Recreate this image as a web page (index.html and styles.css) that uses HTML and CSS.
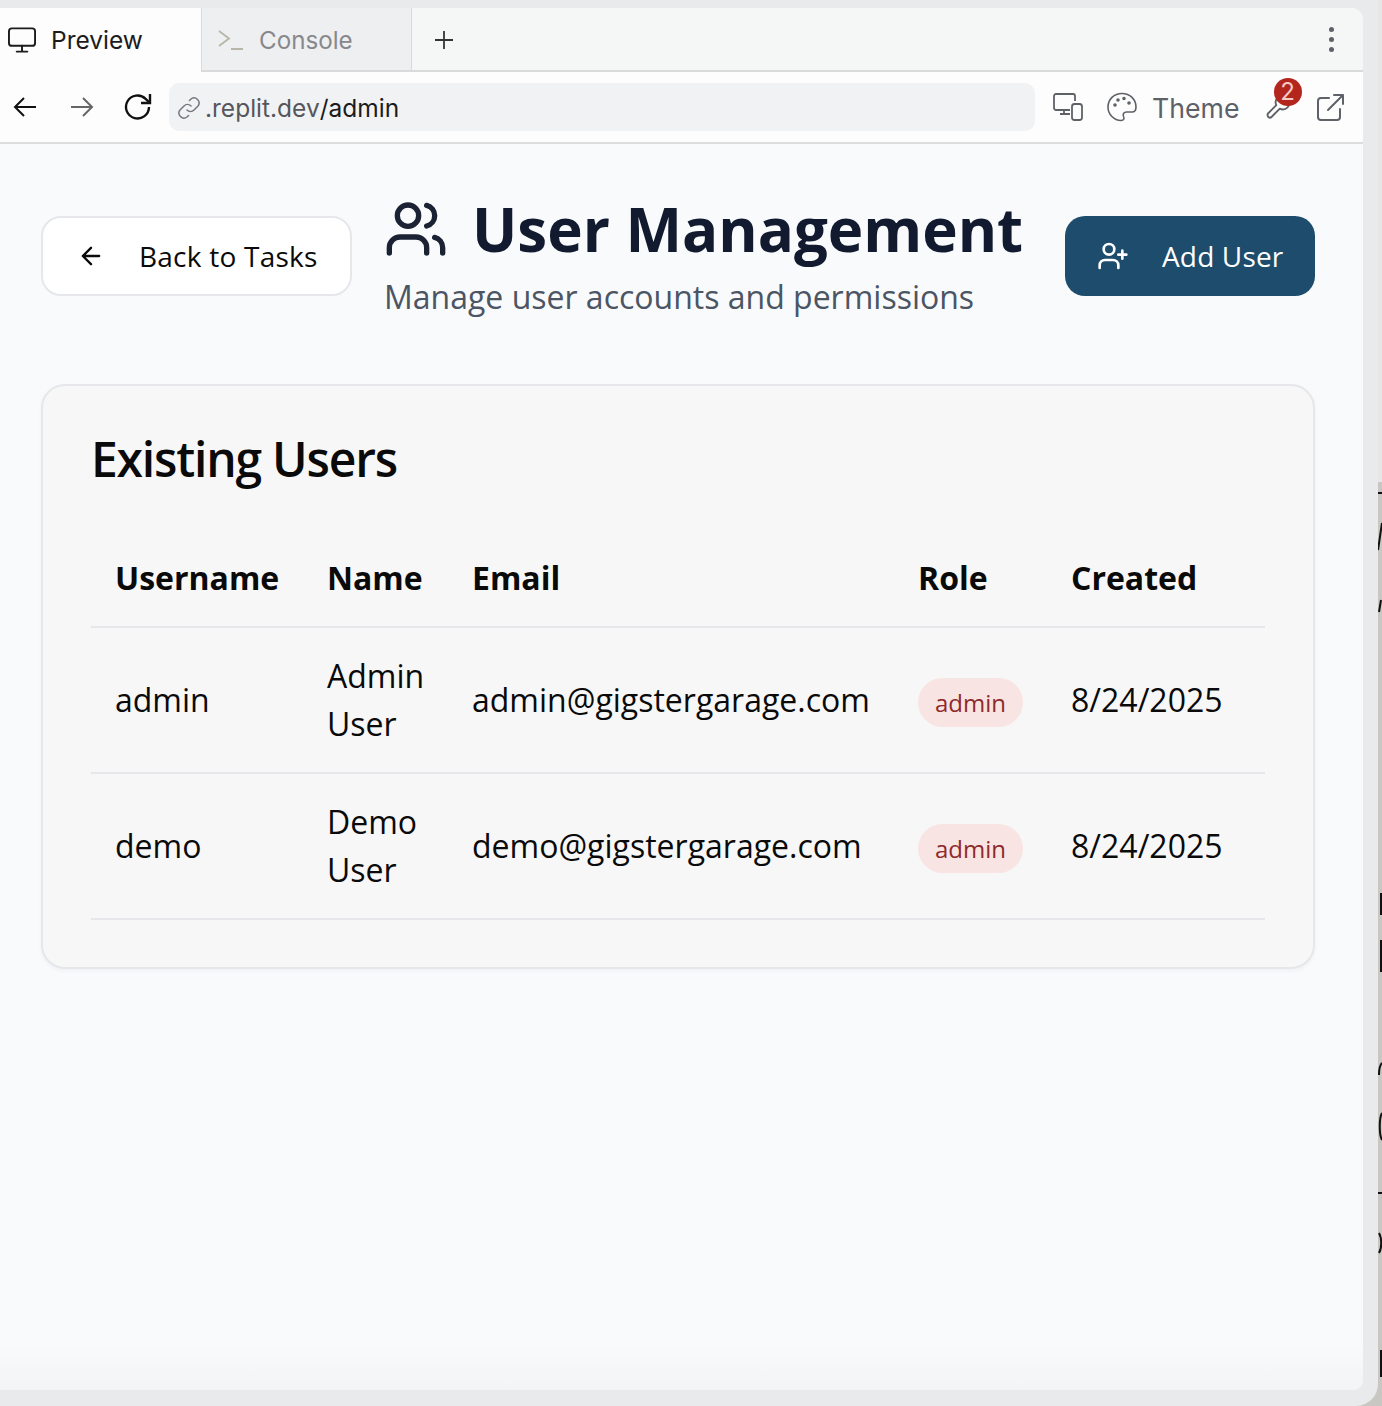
FILE: index.html
```html
<!DOCTYPE html>
<html lang="en">
<head>
  <meta charset="UTF-8">
  <title>User Management</title>
  <link rel="stylesheet" href="styles.css">
</head>
<body>
  <div class="screen">
    <div class="window">
      <div class="tabbar">
        <div class="tab tab-active">
          <svg class="ico-tab" viewBox="0 0 30 26" fill="none" stroke="#1c1c1c" stroke-width="2" stroke-linecap="round" stroke-linejoin="round"><rect x="1" y="1" width="27" height="18" rx="3"/><path d="M14.5 19v5M9 25h11"/></svg>
          <span>Preview</span>
        </div>
        <div class="tab tab-console">
          <svg class="ico-console" viewBox="0 0 26 22" fill="none" stroke="#b8b6a8" stroke-width="1.8"><path d="M1 2l10 7.5L1 17"/><path d="M13 20h12"/></svg>
          <span>Console</span>
        </div>
        <div class="tab-add">
          <svg width="20" height="20" viewBox="0 0 20 20" stroke="#333" stroke-width="1.8"><path d="M10 1v18M1 10h18"/></svg>
        </div>
        <div class="tab-menu"><i></i><i></i><i></i></div>
      </div>
      <div class="toolbar">
        <svg class="nav nav-back" viewBox="0 0 24 24" fill="none" stroke="#111" stroke-width="2"><path d="M23 12H2M11 3l-9 9 9 9"/></svg>
        <svg class="nav nav-forward" viewBox="0 0 24 24" fill="none" stroke="#666" stroke-width="2"><path d="M1 12h21M13 3l9 9-9 9"/></svg>
        <svg class="nav nav-reload" viewBox="0 0 30 30" fill="none" stroke="#111" stroke-width="2.4"><path d="M26 15a11.500 11.500 0 1 1-3.400-8.200L27 11"/><path d="M27 2v9h-9"/></svg>
        <div class="urlbar">
          <svg width="24" height="24" viewBox="0 0 24 24" fill="none" stroke="#77787c" stroke-width="1.500" stroke-linecap="round"><path d="M10 14a5 5 0 0 0 7 0l4-4a5 5 0 0 0-7-7l-1.500 1.500"/><path d="M14 10a5 5 0 0 0-7 0l-4 4a5 5 0 0 0 7 7l1.500-1.500"/></svg>
          <span class="url-host">.replit.dev</span><span class="url-path">/admin</span>
        </div>
        <div class="tools">
          <svg class="tool-devices" viewBox="0 0 30 28" fill="none" stroke="#5f6168" stroke-width="1.800" stroke-linejoin="round"><path d="M17 17H3a2 2 0 0 1-2-2V3a2 2 0 0 1 2-2h17a2 2 0 0 1 2 2v5"/><path d="M11 17v4M7 21h10"/><rect x="19" y="11" width="10" height="16" rx="2.500"/></svg>
          <svg class="tool-palette" viewBox="0 0 30 30" fill="none" stroke="#5f6168" stroke-width="1.600"><path d="M15 1.500C7 1.500 1 7.500 1 15c0 7.500 6 13.500 13 13.500 3 0 3.500-2 2.500-4-1-2.500.5-4.500 3-4.500H25c2.500 0 4-2 4-5C29 7.500 23 1.500 15 1.500z"/><circle cx="8" cy="13" r="1" fill="#5f6168"/><circle cx="11" cy="8" r="1" fill="#5f6168"/><circle cx="17" cy="6.500" r="1" fill="#5f6168"/><circle cx="22" cy="11" r="1" fill="#5f6168"/></svg>
          <span class="theme">Theme</span>
          <div class="wrench">
            <svg viewBox="0 0 24 24" fill="none" stroke="#5f6168" stroke-width="1.600" stroke-linecap="round" stroke-linejoin="round"><path d="M14.700 6.300a1 1 0 0 0 0 1.400l1.600 1.600a1 1 0 0 0 1.400 0l3.770-3.770a6 6 0 0 1-7.940 7.940l-6.910 6.910a2.120 2.120 0 0 1-3-3l6.910-6.910a6 6 0 0 1 7.940-7.940l-3.760 3.760z"/></svg>
            <span class="badge-count">2</span>
          </div>
          <svg class="tool-open" viewBox="0 0 28 28" fill="none" stroke="#5f6168" stroke-width="2" stroke-linecap="round" stroke-linejoin="round"><path d="M12 5H4a3 3 0 0 0-3 3v16a3 3 0 0 0 3 3h16a3 3 0 0 0 3-3v-8"/><path d="M11 17L26 2M17 2h9v9"/></svg>
        </div>
      </div>
      <main class="page">
        <header class="page-head">
          <button class="btn btn-back">
            <svg width="28" height="28" viewBox="0 0 24 24" fill="none" stroke="#0a0a0a" stroke-width="2" stroke-linecap="round" stroke-linejoin="round"><path d="M19 12H5M12 19l-7-7 7-7"/></svg>
            Back to Tasks
          </button>
          <div class="title-block">
            <h1>
              <svg width="64" height="64" viewBox="0 0 24 24" fill="none" stroke="#1a2234" stroke-width="2" stroke-linecap="round" stroke-linejoin="round"><path d="M16 21v-2a4 4 0 0 0-4-4H6a4 4 0 0 0-4 4v2"/><circle cx="9" cy="7" r="4"/><path d="M22 21v-2a4 4 0 0 0-3-3.870"/><path d="M16 3.130a4 4 0 0 1 0 7.750"/></svg>
              User Management
            </h1>
            <p>Manage user accounts and permissions</p>
          </div>
          <button class="btn btn-add">
            <svg width="32" height="32" viewBox="0 0 24 24" fill="none" stroke="#fff" stroke-width="2" stroke-linecap="round" stroke-linejoin="round"><path d="M16 21v-2a4 4 0 0 0-4-4H6a4 4 0 0 0-4 4v2"/><circle cx="9" cy="7" r="4"/><path d="M19 8v6M22 11h-6"/></svg>
            Add User
          </button>
        </header>

        <section class="card">
          <h2>Existing Users</h2>
          <table class="users">
            <colgroup>
              <col class="c-user"><col class="c-name"><col class="c-email"><col class="c-role"><col class="c-created">
            </colgroup>
            <thead>
              <tr><th>Username</th><th>Name</th><th>Email</th><th>Role</th><th>Created</th></tr>
            </thead>
            <tbody>
              <tr>
                <td class="uname">admin</td><td>Admin User</td><td>admin@gigstergarage.com</td>
                <td><span class="role">admin</span></td><td>8/24/2025</td>
              </tr>
              <tr>
                <td class="uname">demo</td><td>Demo User</td><td>demo@gigstergarage.com</td>
                <td><span class="role">admin</span></td><td>8/24/2025</td>
              </tr>
            </tbody>
          </table>
        </section>
      </main>
    </div>
  </div>
  <!-- sliver of the window behind -->
  <div class="edge">
    <svg width="4" height="1406" viewBox="0 0 4 1406" fill="none" stroke="#111" stroke-width="2">
      <path d="M0 493h4M4 523L0 550M3 600L1 612M3 893v22M3 940v32"/>
      <path d="M4 1063c-2 2-3 5-3 12M4 1113c-3 5-3 22 0 27M0 1193h4M1 1233c3 5 3 15 0 20M3 1350v27"/>
    </svg>
  </div>
</body>
</html>
```

FILE: styles.css
```css
html, body {
  margin: 0;
  padding: 0;
}
body {
  display: flex;
  width: 1382px;
  height: 1406px;
  overflow: hidden;
  background: #c9c7c1;
  font-family: "Open Sans", "Liberation Sans", sans-serif;
}
.screen {
  width: 1378px;
  height: 1406px;
  flex-shrink: 0;
  box-sizing: border-box;
  padding: 8px 15px 16px 0;
  background: #e9eaec;
  border-bottom-right-radius: 22px;
  overflow: hidden;
}
.edge {
  width: 4px;
  height: 1406px;
  flex-shrink: 0;
  background: linear-gradient(to bottom, #e6e6e6 0, #e6e6e6 482px, #c9c7c1 482px);
}
.edge svg {
  display: block;
}
.window {
  width: 1363px;
  height: 1382px;
  display: flex;
  flex-direction: column;
  border-radius: 0 12px 10px 0;
  overflow: hidden;
  background: #f9fafc;
}

/* tabs */
.tabbar {
  height: 64px;
  display: flex;
  align-items: stretch;
  flex-shrink: 0;
  background: #f5f7f7;
  font-family: "Inter", "Roboto", sans-serif;
  font-size: 24.5px;
}
.tab {
  display: flex;
  align-items: center;
  gap: 14px;
  box-sizing: border-box;
}
.tab-active {
  width: 202px;
  padding-left: 8px;
  background: #fdfdfd;
  color: #1c1c1c;
  border-right: 1px solid #d9dad9;
}
.tab-console {
  width: 210px;
  padding: 2px 0 0 16px;
  gap: 15px;
  background: #eeeff1;
  color: #87888c;
  font-size: 24.2px;
  border-right: 1px solid #d9dad9;
  border-bottom: 2px solid #d9dad9;
}
.ico-tab {
  width: 29px;
  height: 26px;
}
.ico-console {
  width: 26px;
  height: 22px;
}
.tab-add {
  width: 64px;
  box-sizing: border-box;
  padding-top: 2px;
  display: flex;
  align-items: center;
  justify-content: center;
  border-bottom: 2px solid #d9dad9;
}
.tab-menu {
  flex: 1;
  display: flex;
  flex-direction: column;
  align-items: flex-end;
  justify-content: center;
  gap: 5px;
  padding-right: 29px;
  border-bottom: 2px solid #d9dad9;
}
.tab-menu i {
  width: 5px;
  height: 5px;
  border-radius: 50%;
  background: #5f6168;
}

/* toolbar */
.toolbar {
  height: 72px;
  box-sizing: border-box;
  display: flex;
  align-items: center;
  flex-shrink: 0;
  padding-left: 13px;
  background: #fdfdfd;
  border-bottom: 2px solid #dcdddd;
  font-family: "Inter", "Roboto", sans-serif;
}
.nav {
  width: 24px;
  height: 24px;
}
.nav-back {
  margin-right: 33px;
}
.nav-forward {
  margin-right: 29px;
}
.nav-reload {
  width: 30px;
  height: 30px;
  margin-right: 16px;
}
.urlbar {
  width: 866px;
  height: 48px;
  box-sizing: border-box;
  display: flex;
  align-items: center;
  padding: 2px 0 0 8px;
  background: #f1f2f4;
  border-radius: 10px;
  font-size: 24.5px;
}
.urlbar svg {
  margin-right: 4px;
}
.url-host {
  color: #55575c;
}
.url-path {
  color: #1c1c1c;
}
.tools {
  display: flex;
  align-items: center;
  margin-left: 18px;
}
.tool-devices {
  width: 30px;
  height: 28px;
  margin-right: 24px;
}
.tool-palette {
  width: 30px;
  height: 30px;
  margin-right: 15px;
}
.theme {
  padding-top: 2px;
  font-size: 26.7px;
  color: #5f6168;
  margin-right: 24px;
}
.wrench {
  position: relative;
  width: 28px;
  height: 28px;
  margin-right: 25px;
}
.wrench svg {
  display: block;
  width: 28px;
  height: 28px;
}
.badge-count {
  position: absolute;
  top: -15px;
  left: 10px;
  width: 28px;
  height: 28px;
  border-radius: 50%;
  background: #b3261e;
  color: #f6c9c5;
  font-size: 24px;
  line-height: 28px;
  text-align: center;
}
.tool-open {
  width: 28px;
  height: 28px;
}

/* page */
.page {
  flex: 1;
  box-sizing: border-box;
  padding: 72px 48px 0 41px;
  background: linear-gradient(to bottom, #f9fafc 0, #f9fafc 1200px, #f3f4f5 100%);
}
.page-head {
  display: flex;
  align-items: flex-start;
  justify-content: space-between;
  height: 168px;
}
.btn {
  height: 80px;
  box-sizing: border-box;
  display: flex;
  align-items: center;
  border-radius: 20px;
  font-family: inherit;
  font-size: 28px;
  line-height: 1;
}
.btn-back {
  width: 311px;
  gap: 34px;
  padding-left: 34px;
  background: #fff;
  color: #0a0a0a;
  border: 2px solid #e5e7eb;
  letter-spacing: 0.23px;
}
.btn-add {
  width: 250px;
  gap: 33px;
  padding-left: 32px;
  background: #1d4c6c;
  color: #fff;
  border: 0;
  letter-spacing: 0.15px;
}
.title-block {
  margin-top: -19px;
  margin-left: 32px;
  margin-right: auto;
}
h1 {
  display: flex;
  align-items: center;
  gap: 24px;
  margin: 0;
  height: 64px;
  color: #111a2e;
  font-size: 60px;
  font-weight: 700;
  line-height: 64px;
}
.title-block p {
  margin: 14px 0 0;
  color: #4b5563;
  font-size: 32px;
  line-height: 44px;
}

/* users card */
.card {
  width: 1274px;
  height: 585px;
  box-sizing: border-box;
  padding: 49px 48px 48px;
  background: #f7f7f7;
  border: 2px solid #e5e7eb;
  border-radius: 24px;
  box-shadow: 0 2px 4px rgba(0,0,0,0.04);
}
h2 {
  margin: 0;
  height: 48px;
  color: #0a0a0a;
  font-size: 48px;
  font-weight: 600;
  line-height: 48px;
  letter-spacing: -1.2px;
}
.users {
  width: 1174px;
  margin-top: 47px;
  border-collapse: collapse;
  table-layout: fixed;
  color: #0a0a0a;
  font-size: 32px;
  line-height: 48px;
}
.c-user { width: 212px; }
.c-name { width: 145px; }
.c-email { width: 446px; }
.c-role { width: 153px; }
.c-created { width: 218px; }
.users th {
  height: 96px;
  padding: 0 24px;
  text-align: left;
  font-weight: 700;
  border-bottom: 2px solid #e5e7eb;
}
.users td {
  height: 146px;
  box-sizing: border-box;
  padding: 24px;
  border-bottom: 2px solid #e5e7eb;
}
.users .uname {
  font-weight: 500;
}
.role {
  display: inline-block;
  height: 49px;
  margin-top: 4px;
  padding: 0 17px;
  border-radius: 25px;
  background: #f9e4e4;
  color: #8f2a2a;
  font-size: 24px;
  line-height: 49px;
  vertical-align: middle;
}
```
